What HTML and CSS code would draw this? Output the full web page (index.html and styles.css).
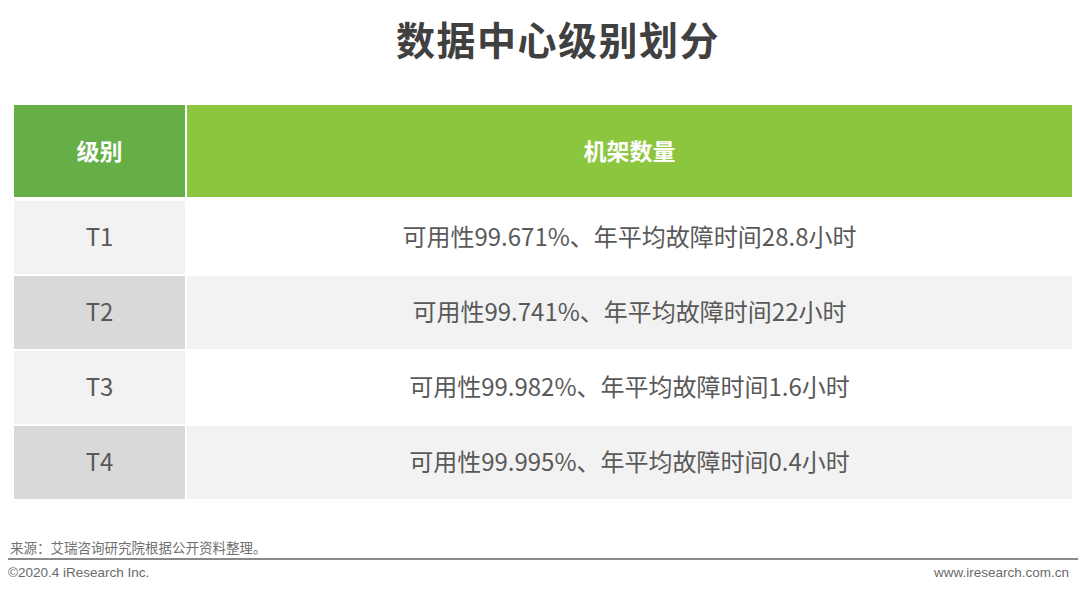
FILE: index.html
```html
<!DOCTYPE html>
<html lang="zh-CN">
<head>
<meta charset="utf-8">
<title>数据中心级别划分</title>
<link rel="stylesheet" href="styles.css">
</head>
<body>
<div class="page">
  <h1 class="title">数据中心级别划分</h1>
  <div class="table">
    <div class="row head">
      <div class="c1">级别</div>
      <div class="c2">机架数量</div>
    </div>
    <div class="row light">
      <div class="c1">T1</div>
      <div class="c2">可用性99.671%、年平均故障时间28.8小时</div>
    </div>
    <div class="row dark">
      <div class="c1">T2</div>
      <div class="c2">可用性99.741%、年平均故障时间22小时</div>
    </div>
    <div class="row light">
      <div class="c1">T3</div>
      <div class="c2">可用性99.982%、年平均故障时间1.6小时</div>
    </div>
    <div class="row dark">
      <div class="c1">T4</div>
      <div class="c2">可用性99.995%、年平均故障时间0.4小时</div>
    </div>
  </div>
  <div class="footer">
    <div class="source">来源：艾瑞咨询研究院根据公开资料整理。</div>
    <div class="bottom">
      <span>©2020.4 iResearch Inc.</span>
      <span>www.iresearch.com.cn</span>
    </div>
  </div>
</div>
</body>
</html>
```
FILE: styles.css
```css
html, body {
  margin: 0;
  padding: 0;
  background: #ffffff;
}
.page {
  width: 1080px;
  height: 594px;
  font-family: "Noto Sans CJK SC", "Noto Sans", sans-serif;
  overflow: hidden;
}
.title {
  margin: 0;
  padding: 13px 0 0 36px;
  height: 90px;
  box-sizing: border-box;
  text-align: center;
  font-size: 39px;
  line-height: 50px;
  font-weight: 700;
  color: #404040;
  letter-spacing: 1.5px;
}
.table {
  margin: 0 8px 0 14px;
  display: flex;
  flex-direction: column;
  gap: 2px;
  padding-top: 15px;
}
.row {
  display: flex;
  gap: 2px;
  height: 73px;
}
.row > div {
  display: flex;
  align-items: center;
  justify-content: center;
  font-size: 24px;
  color: #595959;
  box-sizing: border-box;
  padding-bottom: 5px;
}
.c1 {
  width: 171px;
  flex: none;
}
.c2 {
  flex: 1;
}
.row.head {
  height: 92px;
  margin-bottom: 2px;
}
.head > div {
  color: #ffffff;
  font-weight: 700;
  font-size: 23px;
  padding-bottom: 2px;
}
.head .c1 { background: #66ae46; }
.head .c2 { background: #8cc63f; }
.light .c1 { background: #f2f2f2; }
.light .c2 { background: #ffffff; }
.dark .c1 { background: #d9d9d9; }
.dark .c2 { background: #f2f2f2; }
.footer {
  margin: 40px 2px 0 8px;
}
.source {
  font-size: 13.5px;
  line-height: 16px;
  color: #707070;
  padding: 0 0 3px 2px;
  border-bottom: 2px solid #8a8a8a;
}
.bottom {
  display: flex;
  justify-content: space-between;
  font-family: "Liberation Sans", Arial, sans-serif;
  font-size: 13.5px;
  color: #6a6a6a;
  padding: 5px 9px 0 0;
}
```
